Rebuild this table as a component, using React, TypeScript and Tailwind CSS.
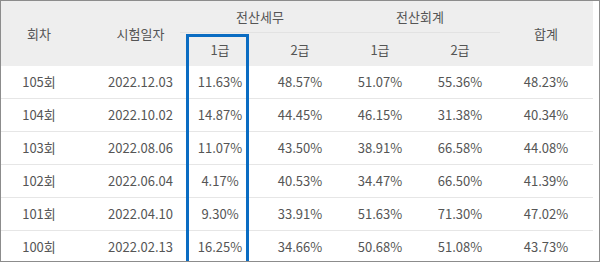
const rows = [
  ["105회", "2022.12.03", "11.63%", "48.57%", "51.07%", "55.36%", "48.23%"],
  ["104회", "2022.10.02", "14.87%", "44.45%", "46.15%", "31.38%", "40.34%"],
  ["103회", "2022.08.06", "11.07%", "43.50%", "38.91%", "66.58%", "44.08%"],
  ["102회", "2022.06.04", "4.17%", "40.53%", "34.47%", "66.50%", "41.39%"],
  ["101회", "2022.04.10", "9.30%", "33.91%", "51.63%", "71.30%", "47.02%"],
  ["100회", "2022.02.13", "16.25%", "34.66%", "50.68%", "51.08%", "43.73%"],
];

const cols = "grid grid-cols-[76px_103px_80px_80px_80px_80px_92px]";

export default function App() {
  return (
    <div
      className="relative h-[262px] w-[600px] overflow-hidden border border-[#8c8c8c] bg-white pr-[6px] text-[13px] text-[#555555]"
      style={{ fontFamily: '"Noto Sans CJK KR", "Noto Sans", sans-serif' }}
    >
      {/* Header */}
      <div className={`${cols} h-[65px] bg-[#eeeeee]`}>
        <div className="row-span-2 flex items-center justify-center">회차</div>
        <div className="row-span-2 flex items-center justify-center pl-[24px]">시험일자</div>
        <div className="col-span-2 flex h-[32px] items-center justify-center border-b border-[#e2e2e2]">
          전산세무
        </div>
        <div className="col-span-2 flex h-[32px] items-center justify-center border-b border-[#e2e2e2]">
          전산회계
        </div>
        <div className="row-span-2 flex items-center justify-center">합계</div>
        <div className="flex h-[33px] items-center justify-center">1급</div>
        <div className="flex h-[33px] items-center justify-center">2급</div>
        <div className="flex h-[33px] items-center justify-center">1급</div>
        <div className="flex h-[33px] items-center justify-center">2급</div>
      </div>

      {/* Body */}
      {rows.map((r) => (
        <div key={r[0]} className={`${cols} h-[33px] border-b border-[#e6e6e6]`}>
          <div className="flex items-center justify-center">{r[0]}</div>
          <div className="flex items-center justify-center pl-[24px]">{r[1]}</div>
          {r.slice(2).map((v, i) => (
            <div key={i} className="flex items-center justify-center">
              {v}
            </div>
          ))}
        </div>
      ))}

      {/* Highlight */}
      <div className="absolute left-[185px] top-[33px] h-[230px] w-[63px] border-[3px] border-[#0a6cc2]" />
    </div>
  );
}
